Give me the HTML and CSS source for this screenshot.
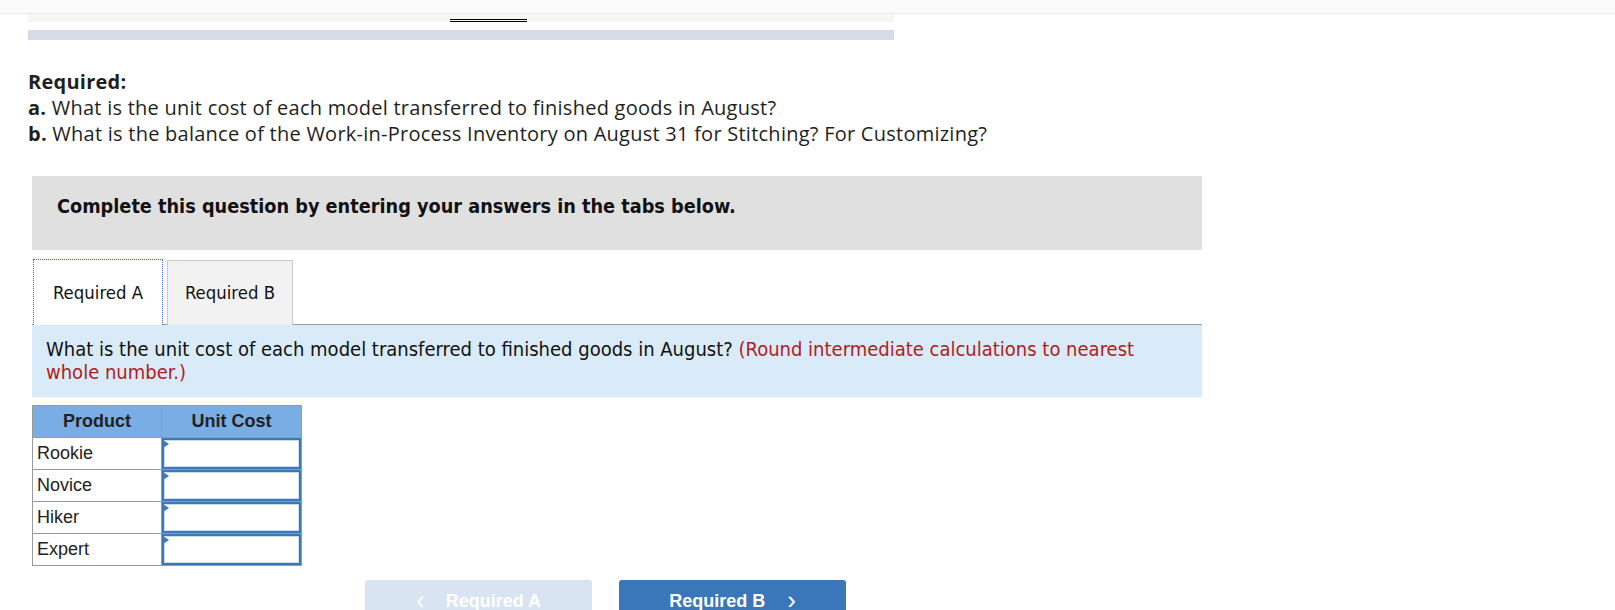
FILE: index.html
```html
<!DOCTYPE html>
<html lang="en">
<head>
<meta charset="utf-8">
<title>Required</title>
<link rel="stylesheet" href="styles.css">
</head>
<body>
<div class="topbar"></div>
<div class="strips">
  <div class="strip-light"><div class="dbl"></div></div>
  <div class="strip-blue"></div>
</div>
<div class="required">
  <div class="req-title">Required:</div>
  <div><b>a.</b> What is the unit cost of each model transferred to finished goods in August?</div>
  <div><b>b.</b> What is the balance of the Work-in-Process Inventory on August 31 for Stitching? For Customizing?</div>
</div>
<div class="question">
  <div class="instr">Complete this question by entering your answers in the tabs below.</div>
  <div class="tabs">
    <div class="tab tab-active">Required A</div>
    <div class="tab tab-other">Required B</div>
  </div>
  <div class="prompt">What is the unit cost of each model transferred to finished goods in August? <span class="note">(Round intermediate calculations to nearest whole number.)</span></div>
  <table class="grid">
    <thead>
      <tr><th class="c1">Product</th><th class="c2">Unit Cost</th></tr>
    </thead>
    <tbody>
      <tr><td class="c1">Rookie</td><td class="c2"><div class="inp"><span class="tri"></span></div></td></tr>
      <tr><td class="c1">Novice</td><td class="c2"><div class="inp"><span class="tri"></span></div></td></tr>
      <tr><td class="c1">Hiker</td><td class="c2"><div class="inp"><span class="tri"></span></div></td></tr>
      <tr><td class="c1">Expert</td><td class="c2"><div class="inp"><span class="tri"></span></div></td></tr>
    </tbody>
  </table>
  <div class="nav">
    <div class="btn btn-prev"><span class="chev">&#8249;</span><span>Required A</span></div>
    <div class="btn btn-next"><span>Required B</span><span class="chev">&#8250;</span></div>
  </div>
</div>
</body>
</html>
```
FILE: styles.css
```css
html, body {
  margin: 0;
  padding: 0;
  background: #ffffff;
}
body {
  font-family: "Open Sans", "Liberation Sans", sans-serif;
  color: #222;
  overflow: hidden;
  height: 610px;
}
.topbar {
  height: 13px;
  background: #fbfbfb;
  border-bottom: 1px solid #ebebeb;
}
.strips {
  margin-left: 28px;
  width: 866px;
}
.strip-light {
  height: 8px;
  background: #f6f6f6;
  padding: 5px 0 0 422px;
  box-sizing: border-box;
}
.dbl {
  width: 77px;
  height: 1px;
  border-top: 1px solid #000;
  border-bottom: 1px solid #000;
}
.strip-blue {
  margin-top: 8px;
  height: 10px;
  background: #d8dbe6;
}
.required {
  margin: 29px 0 0 28px;
  font-size: 20px;
  letter-spacing: 0.25px;
  line-height: 26px;
  color: #1f1f1f;
}
.req-title {
  font-weight: 700;
}
.required b {
  font-weight: 700;
}
.question {
  margin: 29px 0 0 32px;
  width: 1170px;
  font-family: "DejaVu Sans Condensed", "DejaVu Sans", Verdana, sans-serif;
  font-stretch: semi-condensed;
}
.instr {
  height: 74px;
  box-sizing: border-box;
  background: #e0e0e0;
  padding: 19px 0 0 25px;
  font-size: 19.7px;
  line-height: 24px;
  font-weight: 700;
  color: #111;
}
.tabs {
  margin-top: 9px;
  display: flex;
  align-items: flex-start;
  height: 65px;
  border-bottom: 1px solid #9c9c9c;
}
.tab {
  box-sizing: border-box;
  font-size: 18.4px;
  color: #111;
  display: flex;
  align-items: center;
  justify-content: center;
}
.tab-active {
  margin-left: 1px;
  width: 130px;
  height: 66px;
  background: #fff;
  border: 1px dotted #2f6cc0;
  border-bottom: none;
  padding-bottom: 1px;
}
.tab-other {
  margin-left: 4px;
  margin-top: 1px;
  width: 126px;
  height: 65px;
  background: #f2f2f2;
  border: 1px solid #c9c9c9;
  border-bottom: none;
  padding-bottom: 1px;
}
.prompt {
  height: 72px;
  box-sizing: border-box;
  background: #d9eaf8;
  padding: 13px 56px 0 14px;
  font-size: 20px;
  line-height: 23px;
  color: #111;
}
.note {
  color: #b31b1b;
}
.grid {
  margin-top: 8px;
  border-collapse: collapse;
  font-family: "Liberation Sans", Arial, sans-serif;
  font-stretch: normal;
  font-size: 18px;
  color: #222;
}
.grid th, .grid td {
  border: 1px solid #999;
  padding: 0;
  height: 32px;
  box-sizing: border-box;
}
.grid th {
  background: #79ade4;
  font-weight: 700;
  text-align: center;
}
.grid .c1 {
  width: 129px;
}
.grid .c2 {
  width: 140px;
}
.grid td.c1 {
  padding-left: 4px;
  text-align: left;
}
.grid td.c2 {
  padding: 0;
}
.inp {
  position: relative;
  height: 31px;
  box-sizing: border-box;
  border: 2px solid #3c77ba;
  box-shadow: inset 0 0 0 1px #c9dcf0;
  background: #fff;
}
.tri {
  position: absolute;
  left: -1px;
  top: 0;
  width: 0;
  height: 0;
  border-top: 4px solid transparent;
  border-bottom: 4px solid transparent;
  border-left: 6px solid #3c77ba;
}
.nav {
  margin: 14px 0 0 333px;
  display: flex;
  gap: 27px;
  font-family: "Liberation Sans", Arial, sans-serif;
  font-stretch: normal;
}
.btn {
  width: 227px;
  height: 40px;
  box-sizing: border-box;
  border-radius: 3px;
  display: flex;
  justify-content: center;
  align-items: flex-start;
  padding-top: 10px;
  font-size: 18px;
  font-weight: 700;
  color: #fff;
  line-height: 22px;
}
.btn-prev {
  background: #d8e4f1;
  gap: 21px;
}
.btn-next {
  background: #3a76ba;
  gap: 22px;
}
.chev {
  font-size: 26px;
  font-weight: 400;
  line-height: 20px;
}
```
